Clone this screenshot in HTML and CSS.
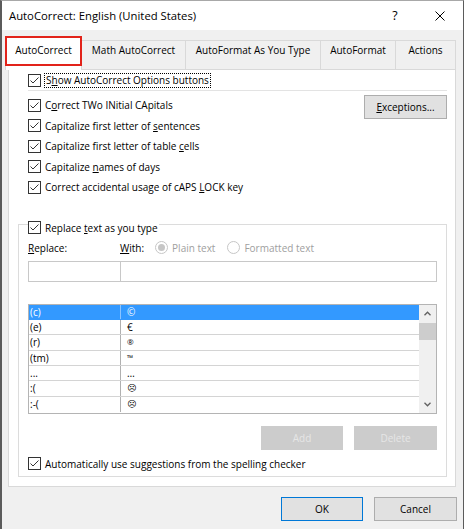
FILE: index.html
```html
<!DOCTYPE html>
<html lang="en">
<head>
<meta charset="utf-8">
<title>AutoCorrect</title>
<link rel="stylesheet" href="styles.css">
</head>
<body>
<div class="window">
  <div class="titlebar">
    <span class="title">AutoCorrect: English (United States)</span>
    <span class="help">?</span>
    <span class="close"><svg width="10" height="10" viewBox="0 0 10 10"><path d="M0.5 0.5 L9.5 9.5 M9.5 0.5 L0.5 9.5" stroke="#000" stroke-width="1" fill="none"/></svg></span>
  </div>
  <div class="client">
    <div class="tabs">
      <div class="tab tab-active tab-auto">AutoCorrect<span class="highlight"></span></div>
      <div class="tab tab-math">Math AutoCorrect</div>
      <div class="tab tab-afayt">AutoFormat As You Type</div>
      <div class="tab tab-af">AutoFormat</div>
      <div class="tab tab-actions">Actions</div>
    </div>
    <div class="panel">
      <div class="check check-first">
        <span class="box"><svg width="11" height="11" viewBox="0 0 11 11"><polyline points="1.5,5.5 4,8 9.5,2.5" fill="none" stroke="#333" stroke-width="1"/></svg></span>
        <span class="focus">S<u>h</u>ow AutoCorrect Options buttons</span>
      </div>
      <div class="sep"></div>
      <div class="options">
        <div class="opt-list">
          <div class="check opt"><span class="box"><svg width="11" height="11" viewBox="0 0 11 11"><polyline points="1.5,5.5 4,8 9.5,2.5" fill="none" stroke="#333" stroke-width="1"/></svg></span><span>C<u>o</u>rrect TWo INitial CApitals</span></div>
          <div class="check opt"><span class="box"><svg width="11" height="11" viewBox="0 0 11 11"><polyline points="1.5,5.5 4,8 9.5,2.5" fill="none" stroke="#333" stroke-width="1"/></svg></span><span>Capitalize first letter of <u>s</u>entences</span></div>
          <div class="check opt"><span class="box"><svg width="11" height="11" viewBox="0 0 11 11"><polyline points="1.5,5.5 4,8 9.5,2.5" fill="none" stroke="#333" stroke-width="1"/></svg></span><span>Capitalize first letter of table <u>c</u>ells</span></div>
          <div class="check opt"><span class="box"><svg width="11" height="11" viewBox="0 0 11 11"><polyline points="1.5,5.5 4,8 9.5,2.5" fill="none" stroke="#333" stroke-width="1"/></svg></span><span>Capitalize <u>n</u>ames of days</span></div>
          <div class="check opt"><span class="box"><svg width="11" height="11" viewBox="0 0 11 11"><polyline points="1.5,5.5 4,8 9.5,2.5" fill="none" stroke="#333" stroke-width="1"/></svg></span><span>Correct accidental usage of cAPS <u>L</u>OCK key</span></div>
        </div>
        <button class="btn btn-exc"><u>E</u>xceptions...</button>
      </div>
      <fieldset class="group">
        <legend class="legend">
          <span class="box"><svg width="11" height="11" viewBox="0 0 11 11"><polyline points="1.5,5.5 4,8 9.5,2.5" fill="none" stroke="#333" stroke-width="1"/></svg></span>
          <span>Replace <u>t</u>ext as you type</span>
        </legend>
        <div class="labels">
          <span class="lbl-replace"><u>R</u>eplace:</span>
          <span class="lbl-with"><u>W</u>ith:</span>
          <div class="radios">
            <span class="radio"><svg width="13" height="13" viewBox="0 0 13 13"><circle cx="6.5" cy="6.5" r="6" fill="#fff" stroke="#c6c6c6"/><circle cx="6.5" cy="6.5" r="3.5" fill="#c6c6c6"/></svg><span>Plain text</span></span>
            <span class="radio"><svg width="13" height="13" viewBox="0 0 13 13"><circle cx="6.5" cy="6.5" r="6" fill="#fff" stroke="#c6c6c6"/></svg><span>Formatted text</span></span>
          </div>
        </div>
        <div class="inputs">
          <div class="input input-replace"></div>
          <div class="input input-with"></div>
        </div>
        <div class="list">
          <div class="rows">
            <div class="row row-selected"><span class="c1">(c)</span><span class="c2">©</span></div>
            <div class="row"><span class="c1">(e)</span><span class="c2">€</span></div>
            <div class="row"><span class="c1">(r)</span><span class="c2 sym-small">®</span></div>
            <div class="row"><span class="c1">(tm)</span><span class="c2 sym-small">™</span></div>
            <div class="row"><span class="c1">...</span><span class="c2">…</span></div>
            <div class="row"><span class="c1">:(</span><span class="c2 sym-face">☹</span></div>
            <div class="row row-last"><span class="c1">:-(</span><span class="c2 sym-face">☹</span></div>
          </div>
          <div class="scrollbar">
            <span class="sb-btn"><svg width="7" height="5" viewBox="0 0 7 5"><polyline points="0.5,4.2 3.5,1.2 6.5,4.2" fill="none" stroke="#606060" stroke-width="1.3"/></svg></span>
            <span class="sb-thumb"></span>
            <span class="sb-btn sb-down"><svg width="7" height="5" viewBox="0 0 7 5"><polyline points="0.5,0.8 3.5,3.8 6.5,0.8" fill="none" stroke="#606060" stroke-width="1.3"/></svg></span>
          </div>
        </div>
        <div class="list-buttons">
          <button class="btn btn-disabled btn-add">Add</button>
          <button class="btn btn-disabled btn-delete">Delete</button>
        </div>
        <div class="check check-auto">
          <span class="box"><svg width="11" height="11" viewBox="0 0 11 11"><polyline points="1.5,5.5 4,8 9.5,2.5" fill="none" stroke="#333" stroke-width="1"/></svg></span>
          <span>Automatically use suggestions from the spelling checker</span>
        </div>
      </fieldset>
    </div>
    <div class="footer">
      <button class="btn btn-default btn-ok">OK</button>
      <button class="btn btn-cancel">Cancel</button>
    </div>
  </div>
</div>
</body>
</html>
```

FILE: styles.css
```css
html, body {
  margin: 0;
  padding: 0;
}

body {
  font-family: "Open Sans", "Noto Sans", sans-serif;
  font-size: 10px;
  color: #000;
  background: #f0f0f0;
}

.window {
  width: 464px;
  height: 529px;
  box-sizing: border-box;
  border-left: 2px solid #5b5b5b;
  border-right: 1px solid #5b5b5b;
  border-top: 1px solid #a8a8a8;
  background: #f0f0f0;
  display: flex;
  flex-direction: column;
  overflow: hidden;
}

.titlebar {
  height: 29px;
  flex: none;
  background: #fff;
  display: flex;
  align-items: center;
  padding-left: 7px;
  font-size: 11.3px;
}

.title {
  flex: 1;
}

.help {
  width: 14px;
  text-align: center;
  font-size: 12.5px;
  margin-right: 33px;
}

.close {
  width: 10px;
  height: 10px;
  margin-right: 18px;
  display: flex;
}

.client {
  flex: 1;
  padding: 7px 7px 0 6px;
}

.tabs {
  display: flex;
  align-items: flex-end;
  height: 32px;
  margin-left: -3px;
}

.tab {
  box-sizing: border-box;
  height: 29px;
  border-top: 1px solid #d9d9d9;
  border-left: 1px solid #d9d9d9;
  background: #f0f0f0;
  text-align: center;
  line-height: 14px;
  padding-top: 2px;
  white-space: nowrap;
}

.tab-active {
  position: relative;
  z-index: 1;
  height: 33px;
  margin-bottom: -1px;
  padding-top: 5px;
  background: #fff;
  border-right: 1px solid #d9d9d9;
}

.tab-auto { width: 77px; }
.tab-math { width: 103px; border-left: none; }
.tab-afayt { width: 135px; }
.tab-af { width: 75px; }
.tab-actions { width: 61px; border-right: 1px solid #d9d9d9; }

.highlight {
  position: absolute;
  left: -1px;
  top: -2px;
  width: 77px;
  height: 30px;
  box-sizing: border-box;
  border: 2px solid #e2231a;
}

.panel {
  box-sizing: border-box;
  height: 418px;
  background: #fff;
  border: 1px solid #d9d9d9;
  padding: 0 8px 0 19px;
}

.check {
  display: flex;
  align-items: center;
  gap: 4px;
  height: 20px;
  line-height: 14px;
  white-space: nowrap;
}

.check-first {
  gap: 3px;
}

.box {
  flex: none;
  width: 13px;
  height: 13px;
  box-sizing: border-box;
  border: 1px solid #333;
  background: #fff;
  display: flex;
}

.focus {
  border: 1px dotted #000;
  padding: 0 1px;
  line-height: 13px;
}

.sep {
  height: 1px;
  background: #e3e3e3;
}

.options {
  display: flex;
  justify-content: space-between;
  align-items: flex-start;
  margin-top: 4px;
}

.opt {
  height: 20.5px;
}

.btn {
  box-sizing: border-box;
  height: 24px;
  padding: 0;
  margin: 0;
  font-family: "Open Sans", "Noto Sans", sans-serif;
  font-size: 10px;
  color: #000;
  background: #e1e1e1;
  border: 1px solid #adadad;
}

.btn-exc {
  width: 83px;
}

.group {
  margin: 17px 0 0 -10px;
  padding: 0 9px 2px;
  border: 1px solid #dcdcdc;
  min-width: 0;
}

.legend {
  display: flex;
  align-items: center;
  gap: 4px;
  height: 14px;
  padding: 6px 1px 0 0;
  line-height: 14px;
  white-space: nowrap;
}

.labels {
  display: flex;
  align-items: center;
  height: 20px;
  margin-top: 3px;
  white-space: nowrap;
}

.lbl-replace {
  width: 92px;
}

.radios {
  display: flex;
  gap: 12px;
  margin-left: 11px;
  color: #a0a0a0;
}

.radio {
  display: flex;
  align-items: center;
  gap: 4px;
}

.inputs {
  display: flex;
  margin-top: 3px;
}

.input {
  box-sizing: border-box;
  height: 21px;
  border: 1px solid #c8c8c8;
  background: #fff;
}

.input-replace {
  width: 93px;
  flex: none;
}

.input-with {
  flex: 1;
  margin-left: -1px;
}

.list {
  display: flex;
  box-sizing: border-box;
  height: 110px;
  margin-top: 22px;
  border: 1px solid #b4b4b4;
  overflow: hidden;
}

.rows {
  flex: 1;
}

.row {
  display: flex;
  box-sizing: border-box;
  height: 15.4px;
  border-bottom: 1px solid #d4d4d4;
  line-height: 14px;
  white-space: nowrap;
}

.row-last {
  border-bottom: none;
}

.row-selected {
  background: #3399ff;
  color: #fff;
  border-bottom-color: #3399ff;
}

.c1 {
  box-sizing: border-box;
  width: 92px;
  flex: none;
  padding-left: 1px;
  border-right: 1px solid #b0b0b0;
}

.row-selected .c1 {
  border-right-color: #8cc4ff;
}

.c2 {
  padding-left: 6px;
}

.sym-small {
  font-size: 8px;
}

.sym-face {
  font-family: "DejaVu Sans", sans-serif;
  font-size: 9px;
}

.scrollbar {
  width: 17px;
  flex: none;
  background: #f0f0f0;
  display: flex;
  flex-direction: column;
}

.sb-btn {
  height: 17px;
  display: flex;
  align-items: center;
  justify-content: center;
}

.sb-thumb {
  height: 17px;
  margin-top: 1px;
  background: #cdcdcd;
}

.sb-down {
  margin-top: auto;
}

.list-buttons {
  display: flex;
  justify-content: flex-end;
  gap: 11px;
  margin-top: 12px;
}

.btn-disabled {
  background: #cccccc;
  border-color: #cccccc;
  color: #e6e6e6;
}

.btn-add { width: 82px; }
.btn-delete { width: 83px; }

.check-auto {
  margin-top: 4px;
}

.footer {
  display: flex;
  justify-content: flex-end;
  gap: 11px;
  margin-top: 10px;
  margin-right: -1px;
}

.btn-default {
  border-color: #0078d7;
}

.btn-ok { width: 82px; }
.btn-cancel { width: 83px; }
```
